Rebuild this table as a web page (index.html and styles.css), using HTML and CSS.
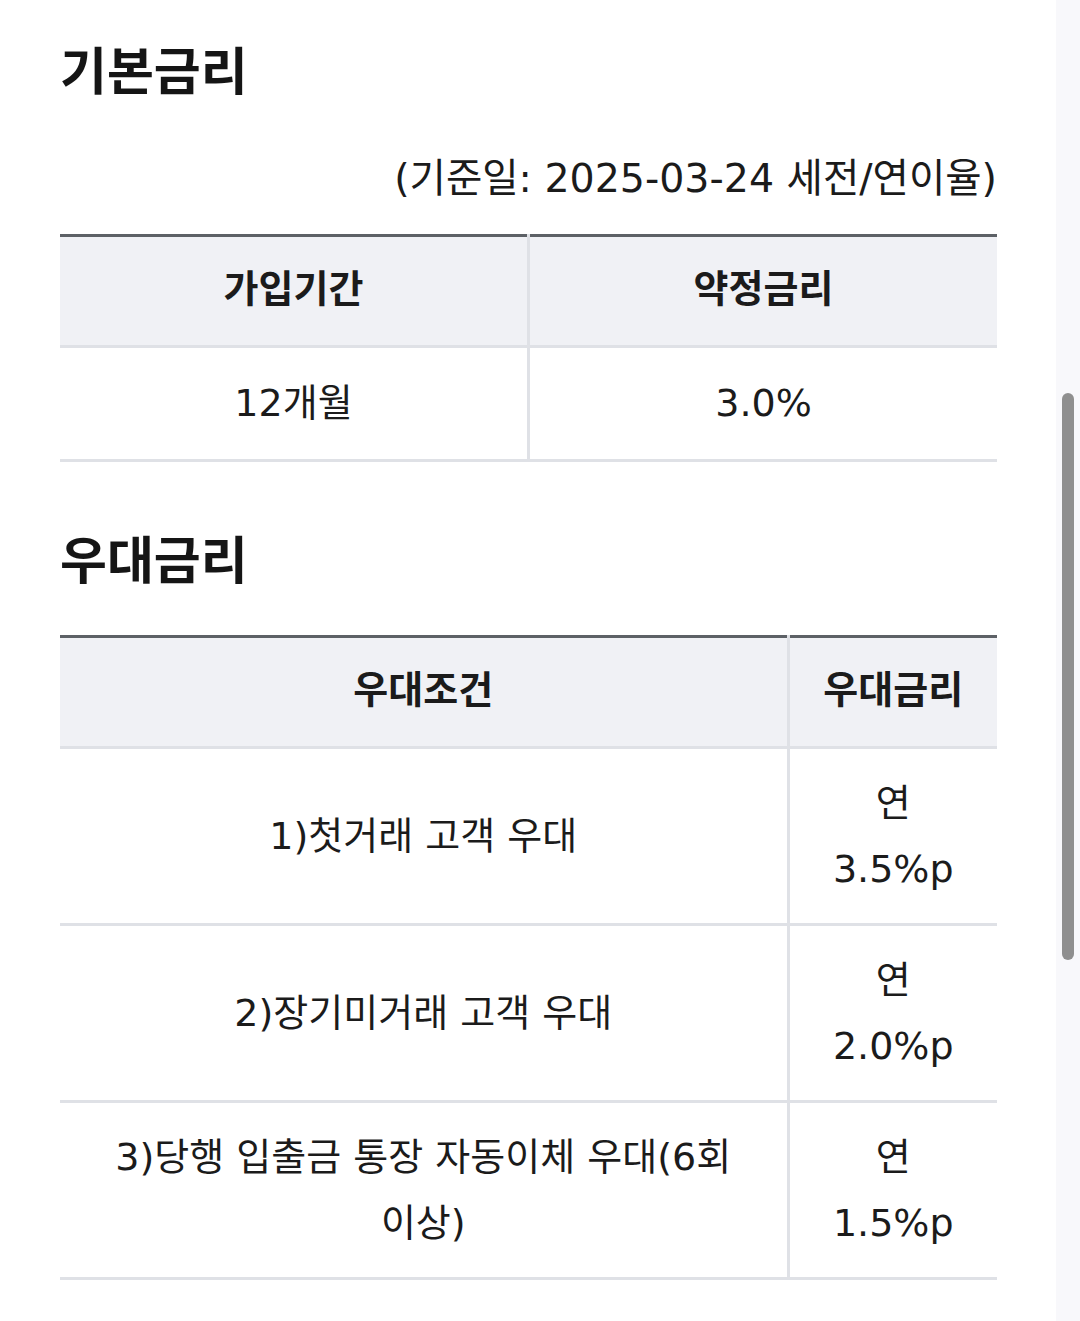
FILE: index.html
```html
<!DOCTYPE html>
<html lang="ko">
<head>
<meta charset="utf-8">
<title>금리</title>
<link rel="stylesheet" href="styles.css">
</head>
<body>
<main class="page">
  <section class="block">
    <h2 class="title">기본금리</h2>
    <p class="note">(기준일: 2025-03-24 세전/연이율)</p>
    <table class="rate-table rate-table-basic">
      <colgroup><col class="half"><col class="half"></colgroup>
      <thead>
        <tr><th>가입기간</th><th>약정금리</th></tr>
      </thead>
      <tbody>
        <tr><td>12개월</td><td>3.0%</td></tr>
      </tbody>
    </table>
  </section>
  <section class="block block-second">
    <h2 class="title">우대금리</h2>
    <table class="rate-table">
      <colgroup><col class="cond"><col class="rate"></colgroup>
      <thead>
        <tr><th>우대조건</th><th>우대금리</th></tr>
      </thead>
      <tbody>
        <tr><td>1)첫거래 고객 우대</td><td>연 3.5%p</td></tr>
        <tr><td>2)장기미거래 고객 우대</td><td>연 2.0%p</td></tr>
        <tr><td>3)당행 입출금 통장 자동이체 우대(6회 이상)</td><td>연 1.5%p</td></tr>
      </tbody>
    </table>
  </section>
</main>
<div class="scrollbar"><div class="thumb"></div></div>
</body>
</html>
```
FILE: styles.css
```css
html, body {
  margin: 0;
  padding: 0;
  background: #ffffff;
}
body {
  font-family: "DejaVu Sans", "Noto Sans CJK KR", sans-serif;
  color: #1b1b1b;
}
.page {
  width: 937px;
  padding: 33px 0 40px 60px;
}
.title {
  margin: 0;
  font-family: "Noto Sans CJK KR", sans-serif;
  font-size: 51px;
  font-weight: 700;
  line-height: 70px;
  color: #151515;
}
.note {
  margin: 47px 0 28px;
  text-align: right;
  font-size: 39.5px;
  line-height: 56px;
  color: #1b1b1b;
}
.block-second {
  margin-top: 60px;
}
.block-second .title {
  margin-bottom: 43px;
}
.rate-table {
  width: 937px;
  border-collapse: collapse;
  table-layout: fixed;
  border-top: 3px solid #5d6166;
}
.half { width: 50%; }
.cond { width: 728px; }
.rate { width: 209px; }
.rate-table th,
.rate-table td {
  padding: 21px 30px;
  line-height: 66px;
  font-size: 38px;
  text-align: center;
  word-break: keep-all;
  border-bottom: 3px solid #dfe1e6;
  border-left: 3px solid #dfe1e6;
}
.rate-table th:first-child,
.rate-table td:first-child {
  border-left: none;
}
.rate-table th {
  background: #f0f1f5;
  font-family: "Noto Sans CJK KR", sans-serif;
  font-size: 38px;
  font-weight: 700;
  color: #1b1b1b;
  padding-top: 16px;
  padding-bottom: 26px;
}
.rate-table td {
  font-weight: 400;
}
.rate-table-basic td {
  padding-top: 22px;
  padding-bottom: 23px;
}
.scrollbar {
  position: fixed;
  top: 0;
  right: 0;
  width: 24px;
  height: 100%;
  background: #f8f8fb;
}
.thumb {
  position: absolute;
  left: 6px;
  top: 393px;
  width: 12px;
  height: 567px;
  border-radius: 6px;
  background: #8f8f8f;
}
```
